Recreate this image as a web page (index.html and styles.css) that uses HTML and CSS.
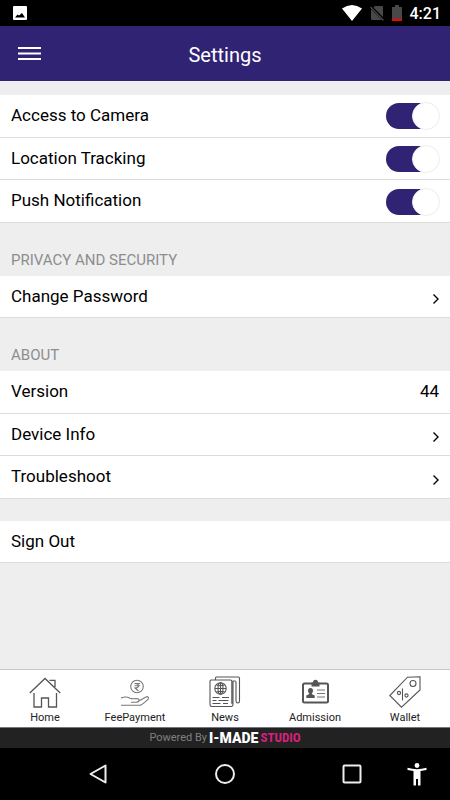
FILE: index.html
```html
<!DOCTYPE html>
<html lang="en">
<head>
<meta charset="utf-8">
<meta name="viewport" content="width=device-width, initial-scale=1">
<title>Settings</title>
<link rel="stylesheet" href="styles.css">
</head>
<body>
<div class="status">
  <svg class="status-photo" width="14" height="14" viewBox="0 0 14 14" aria-hidden="true"><rect width="14" height="14" rx="1" fill="#fff"/><path d="M2 11.500 4.500 8.500 6 9.500 9 7 12 11.500z" fill="#000"/></svg>
  <div class="status-right">
    <svg width="20" height="16" viewBox="0 0 20 16" aria-hidden="true"><path d="M0 3.500Q10-3.500 20 3.500L10 16z" fill="#fff"/></svg>
    <svg width="14" height="16" viewBox="0 0 14 16" aria-hidden="true"><path d="M5 1h7q1 0 1 1v10L3.500 2.500zM1 4l11 11H2q-1 0-1-1z" fill="#484848"/><path d="M.5 2 13.500 15.500" stroke="#484848" stroke-width="1.200"/></svg>
    <svg width="10" height="16" viewBox="0 0 10 16" aria-hidden="true"><path d="M0 2h3V0h4v2h3v12H0z" fill="#484848"/><path d="M0 14h10v2H0z" fill="#f00"/></svg>
    <span class="clock">4:21</span>
  </div>
</div>
<header class="header">
  <button class="menu" aria-label="Menu"><svg width="23" height="14" viewBox="0 0 23 14" aria-hidden="true"><path d="M0 1h23M0 6.500h23M0 12h23" stroke="#fff" stroke-width="2"/></svg></button>
  <h1 class="title">Settings</h1>
</header>
<main class="content">
  <section class="group group-triple">
    <label class="row">Access to Camera<input class="switch" type="checkbox" checked></label>
    <label class="row">Location Tracking<input class="switch" type="checkbox" checked></label>
    <label class="row">Push Notification<input class="switch" type="checkbox" checked></label>
  </section>
  <h2 class="heading">PRIVACY AND SECURITY</h2>
  <section class="group">
    <button class="row">Change Password<svg class="chevron" width="7" height="10" viewBox="0 0 7 10" aria-hidden="true"><path d="M1.500 .6 6 5 1.500 9.400"/></svg></button>
  </section>
  <h2 class="heading">ABOUT</h2>
  <section class="group group-triple">
    <div class="row">Version<span>44</span></div>
    <button class="row">Device Info<svg class="chevron" width="7" height="10" viewBox="0 0 7 10" aria-hidden="true"><path d="M1.500 .6 6 5 1.500 9.400"/></svg></button>
    <button class="row">Troubleshoot<svg class="chevron" width="7" height="10" viewBox="0 0 7 10" aria-hidden="true"><path d="M1.500 .6 6 5 1.500 9.400"/></svg></button>
  </section>
  <section class="group group-last">
    <button class="row">Sign Out</button>
  </section>
</main>
<nav class="tabs">
  <a class="tab" href="#home">
    <svg width="32" height="32" viewBox="0 0 32 32" aria-hidden="true"><g fill="none" stroke="#555" stroke-width="1.300"><path d="M.8 17 16 2.500 31.200 17M5 17V31H12.500V22H19.500V31H27.500V17M20.500 4.300H26V11"/></g></svg>
    Home
  </a>
  <a class="tab" href="#fees">
    <svg width="32" height="32" viewBox="0 0 32 32" aria-hidden="true"><g fill="none" stroke="#777" stroke-width="1.100"><circle cx="18" cy="10.500" r="6.300"/><path d="M15.500 7.500h5.500M15.500 9.700h5.500M16 7.500q3.500 0 3.500 2.200T16 12l3.500 3"/><path d="M2 22q5-2 9 .2 2 .8 6 .3 3.500 0 3 2-.5 1.800-3 1.800h-5M20.300 24.700 27 21q2-1 2.500.8.200 1-1.500 2.500-4.500 4-7 5H2"/></g></svg>
    FeePayment
  </a>
  <a class="tab" href="#news">
    <svg width="32" height="32" viewBox="0 0 32 32" aria-hidden="true"><g fill="none" stroke="#555" stroke-width="1.100"><path d="M6.500 4V2q0-1 1-1h21.800q1.200 0 1.200 1.200V25q0 2-1.700 2t-1.800-2V6.500q0-1.500-1-1.500h-2.500M24 5v23q0 2.500-2 2.500H2.800q-1.800 0-1.800-2V5q0-1 1-1h19.500q1.300 0 1.300 1.300v22.500"/><circle cx="11.500" cy="12.500" r="5.700"/><ellipse cx="11.500" cy="12.500" rx="2.500" ry="5.700"/><path d="M11.500 7v11M6 12.500h11M7.500 9q4 1.500 8 0M7.500 16q4-1.500 8 0M3.500 21.500h7M13 21.500h7M3.500 24.500h4M9.500 24.500h10M3.500 27.500h8M14 27.500h5"/></g></svg>
    News
  </a>
  <a class="tab" href="#admission">
    <svg width="32" height="32" viewBox="0 0 32 32" aria-hidden="true"><rect x="4" y="7.500" width="25" height="19" rx="1.500" fill="none" stroke="#555" stroke-width="2"/><path d="M12.500 6.500h1.500q0-2.800 2.500-2.800T19 6.500h1.500v4h-8z" fill="#555"/><path d="M11.500 12q2.500 0 2.500 2.800 0 1.700-1.300 2.700 0 1 3 1.900v2.600h-8.400v-2.600q3-.9 3-1.900Q9 16.500 9 14.800q0-2.800 2.500-2.800z" fill="#555"/><path d="M18 14h8M18 17.500h8M18 21h8" stroke="#777" stroke-width="1.200"/></svg>
    Admission
  </a>
  <a class="tab" href="#wallet">
    <svg width="32" height="32" viewBox="0 0 32 32" aria-hidden="true"><g fill="none" stroke="#555" stroke-width="1.100"><path d="M18.500 1.200 31 .8V14L12.500 31.200.8 19.500z"/><circle cx="24" cy="7.500" r="3"/><circle cx="10" cy="17" r="1.600"/><circle cx="17.500" cy="19.500" r="1.600"/><path d="M13.500 12.500v12"/></g></svg>
    Wallet
  </a>
</nav>
<footer class="powered">Powered By <span class="brand">I-MADE</span><span class="brand-studio">STUDIO</span></footer>
<div class="system">
  <button class="sys" aria-label="Back"><svg width="20" height="22" viewBox="0 0 20 22" aria-hidden="true"><path d="M17.500 2.500V19.500L2.500 11z" fill="none" stroke="#eee" stroke-width="2" stroke-linejoin="round"/></svg></button>
  <button class="sys" aria-label="Home screen"><svg width="22" height="22" viewBox="0 0 22 22" aria-hidden="true"><circle cx="11" cy="11" r="9" fill="none" stroke="#eee" stroke-width="2"/></svg></button>
  <button class="sys" aria-label="Recent apps"><svg width="20" height="20" viewBox="0 0 20 20" aria-hidden="true"><rect x="1.500" y="1.500" width="17" height="17" rx="1" fill="none" stroke="#eee" stroke-width="2"/></svg></button>
  <button class="sys sys-access" aria-label="Accessibility"><svg width="20" height="23" viewBox="0 0 20 23" aria-hidden="true"><circle cx="10" cy="2.500" r="2.400" fill="#fff"/><path d="M.5 4.800Q10 7.500 19.500 4.800V7L13.500 8V22.500H11V16H9v6.500H6.500V8L.5 7z" fill="#fff"/></svg></button>
</div>
</body>
</html>
```

FILE: styles.css
```css
*, *::before { box-sizing: border-box; }

body {
  margin: 0;
  min-height: 100vh;
  display: flex;
  flex-direction: column;
  background: #eee;
  color: #000;
  font-family: Roboto, "Liberation Sans", sans-serif;
}

button {
  border: 0;
  background: none;
  color: inherit;
  font: inherit;
  padding: 0;
}

svg { display: block; flex: none; }

.status {
  height: 26px;
  padding: 0 9px 0 13px;
  display: flex;
  align-items: center;
  justify-content: space-between;
  background: #000;
}

.status-right {
  display: flex;
  align-items: center;
  gap: 8px;
}

.clock {
  padding-top: 2px;
  color: #fff;
  font-size: 16px;
  font-weight: 500;
  line-height: 20px;
}

.header {
  height: 55px;
  padding: 0 18px;
  display: grid;
  grid-template-columns: 1fr auto 1fr;
  align-items: center;
  background: #312373;
  color: #fff;
}

.menu { justify-self: start; }

.title {
  margin: 0;
  padding-top: 2px;
  font-size: 20px;
  font-weight: 400;
  line-height: 24px;
}

.content {
  flex: 1;
  padding-top: 14px;
}

.group {
  display: flex;
  flex-direction: column;
}

.group-triple { min-height: 128px; }

.group-last { margin-top: 22px; }

.row {
  flex: 1;
  width: 100%;
  min-height: 42px;
  padding: 0 11px 2px;
  display: flex;
  align-items: center;
  justify-content: space-between;
  background: #fff;
  border-bottom: 1px solid #dcdcdc;
  font-size: 17px;
  line-height: 20px;
  text-align: left;
}

.heading {
  margin: 0;
  padding: 28px 11px 7px;
  color: #8d8d8d;
  font-size: 15px;
  font-weight: 400;
  line-height: 18px;
}

.switch {
  appearance: none;
  margin: 3px 0 0;
  width: 53px;
  height: 26px;
  display: flex;
  align-items: center;
  justify-content: flex-end;
  border-radius: 13px;
  background: #312373;
}

.switch::before {
  content: "";
  flex: none;
  width: 28px;
  height: 28px;
  margin-right: -1px;
  border: 1px solid #eee;
  border-radius: 50%;
  background: #fff;
}

.chevron {
  margin-top: 7px;
  fill: none;
  stroke: #000;
  stroke-width: 1.4;
}

.tabs {
  display: grid;
  grid-template-columns: repeat(5, 1fr);
  height: 59px;
  border-top: 1px solid #c8c8c8;
  border-bottom: 1px solid #77737f;
  background: #fff;
}

.tab {
  display: flex;
  flex-direction: column;
  align-items: center;
  gap: 4px;
  padding-top: 6px;
  color: #222;
  font-size: 11px;
  line-height: 12px;
  text-decoration: none;
}

.powered {
  height: 20px;
  display: flex;
  align-items: center;
  justify-content: center;
  gap: 2px;
  background: #222;
  color: #808080;
  font-size: 11px;
  line-height: 16px;
}

.brand {
  color: #fff;
  font-size: 14px;
  font-weight: 900;
}

.brand-studio {
  color: #d9207e;
  font-family: "Roboto Condensed", "Open Sans Condensed", Roboto, sans-serif;
  font-size: 13px;
  font-weight: 700;
}

.system {
  position: relative;
  height: 52px;
  padding: 0 35px;
  display: grid;
  grid-template-columns: repeat(3, 1fr);
  align-items: center;
  background: #000;
}

.sys {
  display: flex;
  justify-content: center;
}

.sys-access {
  position: absolute;
  right: 23px;
  top: 15px;
}
```
